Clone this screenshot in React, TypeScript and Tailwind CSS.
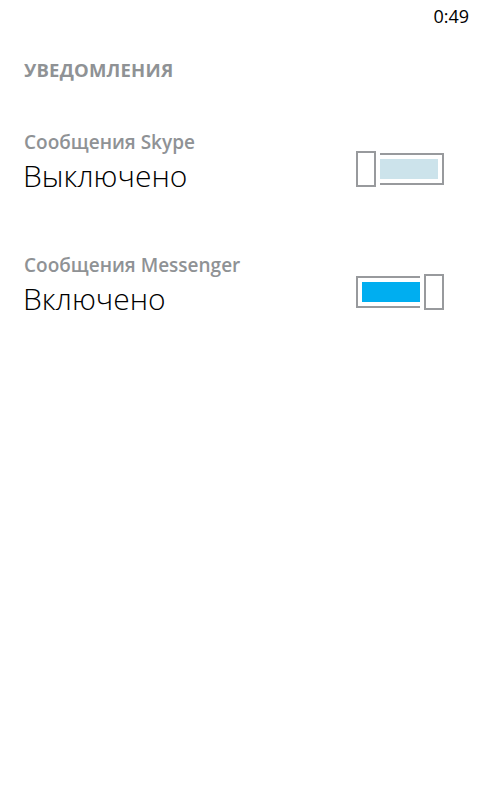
import React, { useState } from "react";

const font = { fontFamily: '"Open Sans", "Noto Sans", sans-serif' };

const Toggle: React.FC<{ on: boolean; onClick: () => void }> = ({ on, onClick }) => {
  if (on) {
    return (
      <button onClick={onClick} className="flex items-center gap-1">
        <div className="w-[64px] h-[32px] border-2 border-r-0 border-[#989a9d] pl-1 py-1 flex">
          <div className="flex-1 bg-[#00aef0]" />
        </div>
        <div className="w-[20px] h-[36px] border-2 border-[#989a9d] bg-white" />
      </button>
    );
  }
  return (
    <button onClick={onClick} className="flex items-center gap-1">
      <div className="w-[20px] h-[36px] border-2 border-[#989a9d] bg-white" />
      <div className="w-[64px] h-[32px] border-2 border-l-0 border-[#989a9d] pr-1 py-1 flex">
        <div className="flex-1 bg-[#cce3eb]" />
      </div>
    </button>
  );
};

const Setting: React.FC<{ label: string; on: boolean; onToggle: () => void }> = ({ label, on, onToggle }) => (
  <div className="flex items-start justify-between">
    <div>
      <div className="text-[19px] leading-[24px] font-semibold text-[#8f9295]">{label}</div>
      <div className="mt-[4px] text-[30px] leading-[36px] font-light text-black -ml-px">
        {on ? "Включено" : "Выключено"}
      </div>
    </div>
    <div className="mr-[36px] mt-[21px]">
      <Toggle on={on} onClick={onToggle} />
    </div>
  </div>
);

export default function App() {
  const [skype, setSkype] = useState(false);
  const [messenger, setMessenger] = useState(true);

  return (
    <div className="w-[480px] h-[800px] bg-white overflow-hidden" style={font}>
      {/* status bar */}
      <div className="h-[32px] flex justify-end items-center pr-[11px]">
        <span className="text-[18px] text-black">0:49</span>
      </div>

      <div className="pl-[24px]">
        <div className="mt-[26px] text-[18.5px] leading-[24px] font-bold text-[#8f9295] tracking-[0.2px]">
          УВЕДОМЛЕНИЯ
        </div>

        <div className="mt-[48px] flex flex-col gap-[59px]">
          <Setting label="Сообщения Skype" on={skype} onToggle={() => setSkype(!skype)} />
          <Setting label="Сообщения Messenger" on={messenger} onToggle={() => setMessenger(!messenger)} />
        </div>
      </div>
    </div>
  );
}
